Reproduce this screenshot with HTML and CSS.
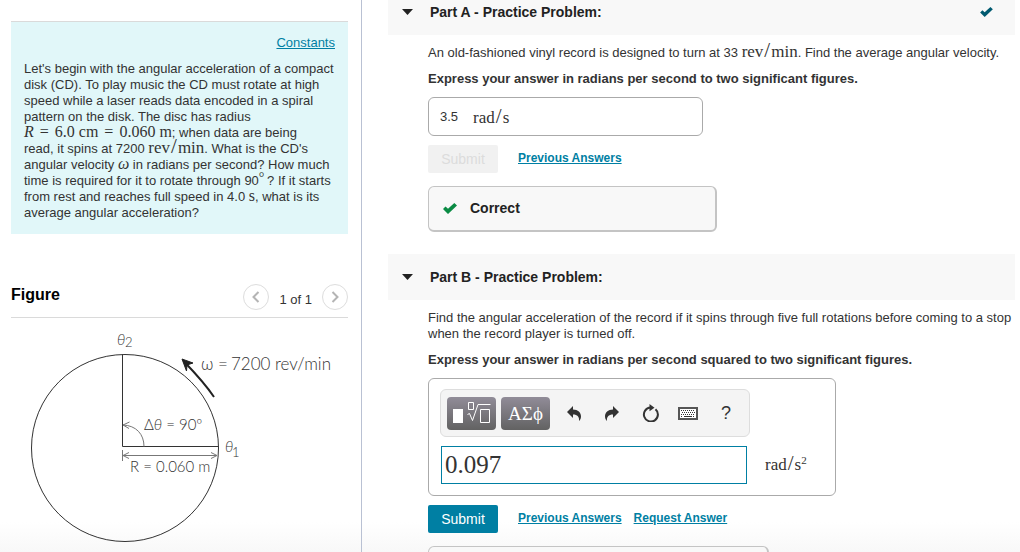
FILE: index.html
```
<!DOCTYPE html>
<html lang="en">
<head>
<meta charset="utf-8">
<title>Angular acceleration</title>
<link rel="stylesheet" href="styles.css">
</head>
<body>
<div class="app">
  <aside class="side">
    <section class="intro">
      <a class="constants" href="#">Constants</a>
      <p class="text">Let's begin with the angular acceleration of a compact disk (CD). To play music the CD must rotate at high speed while a laser reads data encoded in a spiral pattern on the disk. The disc has radius <span class="math"><i>R</i> <span class="rel">=</span> 6.0 cm <span class="rel">=</span> 0.060 m</span>; when data are being<br>read, it spins at 7200 <span class="math unit">rev<span class="per">/</span>min</span>. What is the CD's angular velocity <i class="math">ω</i> in radians per second? How much time is required for it to rotate through 90<span class="degree">°</span>&thinsp;? If it starts from rest and reaches full speed in 4.0 <span class="math">s</span>, what is its average angular acceleration?</p>
    </section>
    <section class="figure">
      <header class="figure-head">
        <h2 class="figure-title">Figure</h2>
        <nav class="pager" aria-label="Figures">
          <button class="pager-btn" type="button" aria-label="Previous figure"><svg width="8" height="12" viewBox="0 0 8 12"><path d="M6.5 1L1.5 6l5 5"/></svg></button>
          <span class="pager-text">1 of 1</span>
          <button class="pager-btn" type="button" aria-label="Next figure"><svg width="8" height="12" viewBox="0 0 8 12"><path d="M1.5 1l5 5-5 5"/></svg></button>
        </nav>
      </header>
      <svg class="diagram" viewBox="0 0 337 232" role="img" aria-label="Disk turning through ninety degrees">
        <circle class="rim" cx="114" cy="130" r="93.5"/>
        <path class="rim" d="M111.5 36.500V128.500H207.500"/>
        <path class="thin" d="M111.500 132V143M112 137.500H206M118 134.500L112 137.500 118 140.500M200 134.500L206 137.500 200 140.500"/>
        <path class="thin" d="M133 128.500C133 116 125 107.500 112 107M118.500 104L112 107 118 110.500"/>
        <path class="spin" d="M203 79C195 67 186 57 172.500 43"/>
        <path class="spin-head" d="M171 41L182 45 176 47 175.500 53Z"/>
        <text class="hand greek" x="106" y="27">θ</text><text class="hand sub" x="114" y="29">2</text>
        <text class="hand greek" x="214" y="134">θ</text><text class="hand sub" x="221" y="139">1</text>
        <text class="hand" x="190" y="52">ω =</text><text class="hand" x="220" y="52">7200 rev/min</text>
        <text class="hand small" x="133" y="112">Δ<tspan class="slant">θ</tspan> = 90º</text>
        <text class="hand small" x="119" y="154">R = 0.060 m</text>
      </svg>
    </section>
  </aside>
  <main class="main">
    <section class="part">
      <header class="part-head part-head-cut">
        <svg class="caret" width="11" height="6" viewBox="0 0 11 6"><path d="M0 0h11L5.500 6z"/></svg>
        <h2 class="part-title">Part A - Practice Problem:</h2>
        <svg class="done" width="13" height="10" viewBox="0 0 14 11"><path d="M0 6L2.500 3.500 5 5.800 11.300 0 14 2.600 5 11z"/></svg>
      </header>
      <div class="part-body">
        <p class="text">An old-fashioned vinyl record is designed to turn at 33 <span class="math unit">rev<span class="per">/</span>min</span>. Find the average angular velocity.</p>
        <p class="text ask">Express your answer in radians per second to two significant figures.</p>
        <div class="given"><span class="given-value">3.5</span><span class="math unit">rad<span class="per">/</span>s</span></div>
        <div class="actions">
          <button class="submit" type="button" disabled>Submit</button>
          <a class="link" href="#">Previous Answers</a>
        </div>
        <div class="feedback">
          <svg class="tick" width="14" height="11" viewBox="0 0 14 11"><path d="M0 6L2.500 3.500 5 5.800 11.300 0 14 2.600 5 11z"/></svg>
          <strong class="feedback-text">Correct</strong>
        </div>
      </div>
    </section>
    <section class="part">
      <header class="part-head">
        <svg class="caret" width="11" height="6" viewBox="0 0 11 6"><path d="M0 0h11L5.500 6z"/></svg>
        <h2 class="part-title">Part B - Practice Problem:</h2>
      </header>
      <div class="part-body">
        <p class="text">Find the angular acceleration of the record if it spins through five full rotations before coming to a stop when the record player is turned off.</p>
        <p class="text ask">Express your answer in radians per second squared to two significant figures.</p>
        <div class="editor">
          <div class="toolbar">
            <button class="key" type="button" aria-label="Templates"><svg width="38" height="24" viewBox="0 0 38 24"><path class="solid" d="M0 8h10v14H0z"/><path class="line" d="M15.500 1.500h5v7h-5zM14.500 13.500l2-1 3 7L25 3.500h12.500M27.500 8.500h9v13h-9z"/></svg></button>
            <button class="key" type="button">ΑΣϕ</button>
            <button class="tool" type="button" aria-label="Undo"><svg width="14" height="15" viewBox="0 0 14 15"><path d="M6 0v3.500C11 3.500 14 6.500 14 10.500c0 2-1 3.500-2 4.500.5-4-1.500-6.500-6-6.500V12L0 6z"/></svg></button>
            <button class="tool" type="button" aria-label="Redo"><svg width="14" height="15" viewBox="0 0 14 15"><path d="M8 0v3.500C3 3.500 0 6.500 0 10.500c0 2 1 3.500 2 4.500-.5-4 1.500-6.500 6-6.500V12l6-6z"/></svg></button>
            <button class="tool" type="button" aria-label="Reset"><svg width="17" height="18" viewBox="0 0 17 18"><path class="stroke" d="M13.500 5.200A7 7 0 1 1 8.500 3.500"/><path d="M7.500 0L12.500 3.700 7.500 7.200z"/></svg></button>
            <button class="tool" type="button" aria-label="Keyboard"><svg width="20" height="13" viewBox="0 0 20 13"><path class="frame" d="M1 1h18v11H1z"/><path class="dots" d="M3 3.500h14M4 5.500h13M3 7.500h14M3 9.500h2M15 9.500h2"/><path class="bar" d="M6 9.500h8"/></svg></button>
            <button class="tool help" type="button">?</button>
          </div>
          <div class="entry">
            <input class="answer" type="text" value="0.097" aria-label="Answer in radians per second squared">
            <span class="math unit entry-unit">rad<span class="per">/</span>s<sup class="power">2</sup></span>
          </div>
        </div>
        <div class="actions">
          <button class="submit" type="button">Submit</button>
          <a class="link" href="#">Previous Answers</a>
          <a class="link" href="#">Request Answer</a>
        </div>
        <div class="feedback feedback-wide"></div>
      </div>
    </section>
  </main>
</div>
</body>
</html>
```
FILE: styles.css
```
* { box-sizing: border-box; }
body { margin: 0; font: 13px/16px "Liberation Sans", Arial, sans-serif; color: #333; }
h2, p { margin: 0; }
svg { display: block; }
button { font-family: inherit; margin: 0; }
a { color: #007fa3; }
.app {
  display: grid;
  grid-template-columns: 362px minmax(0, 1fr);
  height: 100vh;
  overflow: hidden;
  background: linear-gradient(to top, #f8f8f8, #fff 30px);
}
.side { padding: 21px 13px 0 11px; border-right: 1px solid #b9c1d3; }
.intro {
  display: flex;
  flex-direction: column;
  gap: 10px;
  padding: 13px 13px 13px;
  border-top: 1px solid #dadada;
  background: #e1f7f9;
}
.constants { align-self: flex-end; }
.math { font-family: "Liberation Serif", "Times New Roman", serif; font-size: 16px; line-height: 0; white-space: nowrap; }
.unit { font-size: 17px; }
.rel { margin: 0 2px; }
.per { margin: 0 1px; font-size: 21px; line-height: 0; }
.degree { font-family: "Liberation Serif", serif; font-size: 14px; line-height: 0; vertical-align: 3px; }
.power { font-size: 11px; line-height: 0; vertical-align: 6px; }

.figure-head {
  display: flex;
  justify-content: space-between;
  margin-top: 50px;
  height: 34px;
  border-bottom: 1px solid #dadada;
}
.figure-title { font-size: 16px; line-height: 21px; color: #000; }
.pager { display: flex; gap: 10px; }
.pager-btn {
  display: grid;
  place-items: center;
  width: 26px;
  height: 26px;
  padding: 0;
  border: 1px solid #ddd;
  border-radius: 50%;
  background: #fff;
}
.pager-btn path { fill: none; stroke: #b4b4b4; stroke-width: 2; }
.pager-text { line-height: 31px; }
.diagram { width: 100%; overflow: visible; }
.rim { fill: none; stroke: #333; stroke-width: 1; }
.thin { fill: none; stroke: #777; stroke-width: 1; }
.spin { fill: none; stroke: #222; stroke-width: 2; }
.spin-head { fill: #222; stroke: #222; }
.hand { font-family: Lato, sans-serif; font-weight: 300; font-size: 17px; fill: #333; }
.small { font-size: 15px; }
.sub { font-size: 13px; }
.greek { font-size: 15px; font-style: italic; }
.slant { font-style: italic; }

.main { padding: 0 5px 0 26px; }
.part-head {
  display: flex;
  align-items: center;
  height: 46px;
  padding: 0 22px 0 14px;
  background: #f8f8f8;
}
.part-head-cut { height: 35px; padding-bottom: 11px; }
.caret { margin-right: 17px; fill: #222; }
.part-title { font-size: 14px; line-height: 18px; color: #222; }
.done { margin-left: auto; fill: #005a70; }
.part-body { padding: 10px 0 0 40px; }
.part-head-cut + .part-body { padding-bottom: 22px; }
.ask { margin: 10px 0; font-weight: bold; }
.given {
  display: flex;
  align-items: center;
  gap: 15px;
  width: 275px;
  height: 39px;
  padding: 0 11px;
  border: 1px solid #aaa;
  border-radius: 6px;
}
.given-value { font-size: 13px; }
.actions { display: flex; gap: 12px; margin: 9px 0 13px; line-height: 26px; }
.submit {
  width: 70px;
  height: 28px;
  margin-right: 8px;
  padding: 0;
  border: 0;
  border-radius: 2px;
  background: #007fa3;
  color: #fff;
  font-size: 14px;
}
.submit:disabled { background: #f1f1f1; color: #dcdcdc; }
.link { font-size: 12px; font-weight: bold; }
.feedback {
  display: flex;
  align-items: center;
  gap: 13px;
  width: 289px;
  height: 46px;
  padding: 0 14px 1px;
  border: 1px solid #c4c4c4;
  border-right-width: 2px;
  border-bottom-width: 2px;
  border-radius: 6px;
  background: #f8f8f8;
}
.feedback-wide { width: 341px; }
.feedback-text { font-size: 14px; color: #222; }
.tick { fill: #0a8b44; }

.editor {
  width: 408px;
  padding: 10px 11px 11px;
  border: 1px solid #aaa;
  border-radius: 6px;
}
.toolbar {
  display: flex;
  align-items: center;
  width: 310px;
  height: 48px;
  padding-left: 6px;
  border: 1px solid #ddd;
  border-radius: 6px;
  background: #f4f4f4;
}
.key {
  display: grid;
  place-items: center;
  width: 49px;
  height: 33px;
  margin-right: 5px;
  padding: 0;
  border: 0;
  border-radius: 4px;
  background: linear-gradient(#918c98, #626262);
  color: #fff;
  font: 19px/33px "Liberation Serif", serif;
}
.solid { fill: #fff; }
.line { fill: none; stroke: #fff; stroke-width: 1; }
.tool { display: grid; place-items: center; width: 38px; height: 33px; padding: 0; border: 0; background: none; color: #333; fill: #333; }
.help { font-size: 18px; }
.stroke { fill: none; stroke: #333; stroke-width: 2; }
.frame { fill: #fff; stroke: #555; stroke-width: 2; }
.dots { fill: none; stroke: #333; stroke-width: 1; stroke-dasharray: 1 1; }
.bar { stroke: #333; stroke-width: 1; }
.entry { display: flex; align-items: center; gap: 18px; margin-top: 9px; padding-left: 1px; }
.entry-unit { padding-bottom: 6px; }
.answer {
  width: 306px;
  height: 38px;
  padding: 0 3px;
  border: 1px solid #007fa3;
  background: #fff;
  color: #333;
  font: 25px "Liberation Serif", serif;
}
```
